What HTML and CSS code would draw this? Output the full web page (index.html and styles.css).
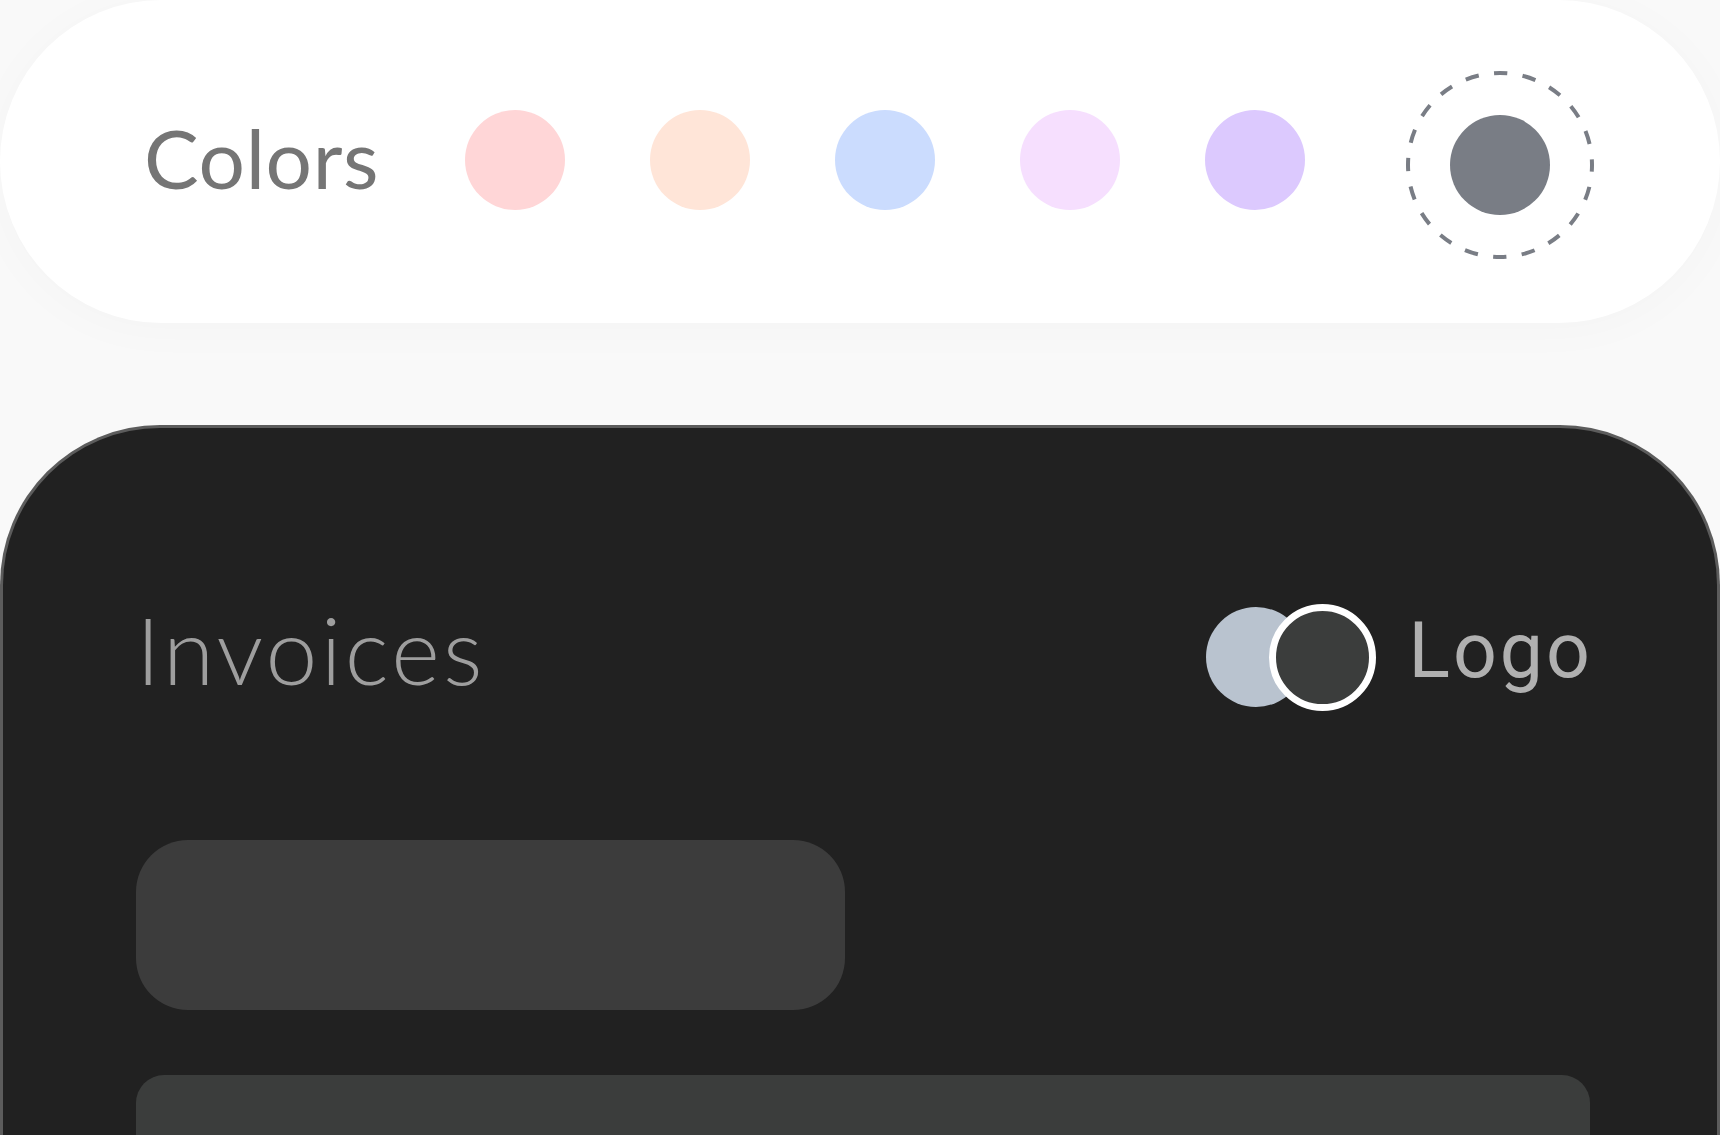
FILE: index.html
```html
<!DOCTYPE html>
<html lang="en">
<head>
<meta charset="utf-8">
<title>Theme preview</title>
<link rel="stylesheet" href="styles.css">
</head>
<body>
  <div class="palette">
    <span class="palette-label">Colors</span>
    <div class="swatches">
      <span class="swatch swatch-pink"></span>
      <span class="swatch swatch-peach"></span>
      <span class="swatch swatch-blue"></span>
      <span class="swatch swatch-lilac"></span>
      <span class="swatch swatch-violet"></span>
      <span class="swatch-selected">
        <svg class="ring" width="188" height="188" viewBox="0 0 188 188">
          <circle cx="94" cy="94" r="92" fill="none" stroke="#797d85" stroke-width="4" stroke-dasharray="13.5 15.4" stroke-dashoffset="6.75"/>
        </svg>
        <span class="swatch swatch-gray"></span>
      </span>
    </div>
  </div>

  <div class="app">
    <div class="app-header">
      <h1 class="app-title">Invoices</h1>
      <div class="brand">
        <span class="brand-mark">
          <span class="mark-back"></span>
          <span class="mark-front"></span>
        </span>
        <span class="brand-name">Logo</span>
      </div>
    </div>
    <div class="placeholder placeholder-short"></div>
    <div class="placeholder placeholder-wide"></div>
  </div>
</body>
</html>
```

FILE: styles.css
```css
html, body {
  margin: 0;
  padding: 0;
}

body {
  width: 1720px;
  height: 1135px;
  overflow: hidden;
  background: #f9f9f9;
  font-family: "Lato", "Noto Sans", sans-serif;
}

.palette {
  box-sizing: border-box;
  height: 323px;
  background: #ffffff;
  border-radius: 162px;
  box-shadow: 0 6px 50px rgba(0, 0, 0, 0.025);
  display: flex;
  align-items: center;
  padding-left: 144px;
}

.palette-label {
  flex: 0 0 321px;
  font-size: 82px;
  font-weight: 400;
  letter-spacing: 0.6px;
  color: #757575;
  line-height: 1;
  margin-top: -10px;
}

.swatches {
  display: flex;
  align-items: center;
  gap: 85px;
  margin-top: -3px;
}

.swatch {
  display: block;
  width: 100px;
  height: 100px;
  border-radius: 50%;
}

.swatch-pink { background: #ffd6d7; }
.swatch-peach { background: #ffe5d8; }
.swatch-blue { background: #cbdcfe; }
.swatch-lilac { background: #f6dffe; }
.swatch-violet { background: #dcc9fe; }
.swatch-gray { background: #797d85; }

.swatch-selected {
  position: relative;
  width: 188px;
  height: 188px;
  margin-left: 16px;
  margin-top: 10px;
  display: flex;
  align-items: center;
  justify-content: center;
}

.ring {
  position: absolute;
  left: 0;
  top: 0;
}

.app {
  box-sizing: border-box;
  margin-top: 102px;
  height: 760px;
  background: #212121;
  border: 3px solid #5c5c5c;
  border-bottom: none;
  border-radius: 160px 160px 0 0;
  padding: 176px 127px 0 133px;
}

.app-header {
  height: 106px;
  display: flex;
  align-items: center;
  justify-content: space-between;
}

.app-title {
  margin: 0;
  font-size: 93px;
  font-weight: 300;
  letter-spacing: 3.4px;
  color: #9e9e9e;
  line-height: 1;
  margin-top: -16px;
}

.brand {
  display: flex;
  align-items: center;
}

.brand-mark {
  display: flex;
  align-items: center;
}

.mark-back {
  display: block;
  width: 100px;
  height: 100px;
  border-radius: 50%;
  background: #b9c3cf;
}

.mark-front {
  display: block;
  box-sizing: border-box;
  width: 107px;
  height: 107px;
  border-radius: 50%;
  background: #3b3d3c;
  border: 7px solid #ffffff;
  margin-left: -37px;
}

.brand-name {
  margin-left: 32px;
  margin-right: -3px;
  font-family: "Roboto", "Noto Sans", sans-serif;
  font-size: 77px;
  font-weight: 400;
  letter-spacing: 3px;
  color: #b0b0b0;
  line-height: 1;
  margin-top: -12px;
}

.placeholder {
  background: #3c3c3c;
}

.placeholder-short {
  margin-top: 130px;
  width: 709px;
  height: 170px;
  border-radius: 52px;
}

.placeholder-wide {
  margin-top: 65px;
  height: 220px;
  border-radius: 28px;
  background: #3b3d3c;
}
```
